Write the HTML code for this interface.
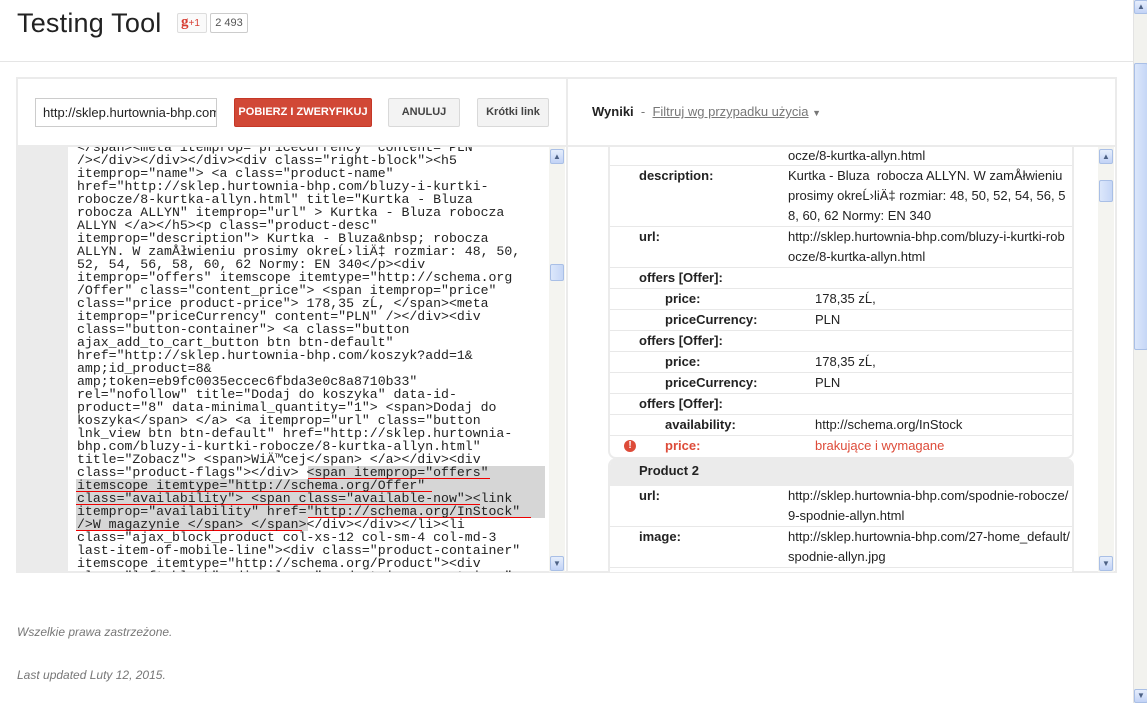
<!DOCTYPE html>
<html><head><meta charset="utf-8">
<style>
*{box-sizing:border-box;margin:0;padding:0}
body{width:1147px;height:703px;overflow:hidden;background:#fff;font-family:"Liberation Sans",Arial,sans-serif;color:#222;position:relative}
.abs{position:absolute}
.title{left:17px;top:8px;font-size:27px;color:#222;letter-spacing:0.2px}
.gp{left:177px;top:13px;width:30px;height:20px;border:1px solid #ddd;border-radius:2px;background:#fafafa;font-size:15px;color:#d73d32;font-family:"Liberation Serif",serif;font-weight:bold;padding-left:3px;line-height:17px}
.gp small{font-family:"Liberation Sans",sans-serif;font-size:10px;font-weight:normal}
.cnt{left:210px;top:13px;width:38px;height:20px;border:1px solid #ccc;border-radius:2px;background:#fff;font-size:11px;color:#555;line-height:18px;text-align:center}
.hr{left:0;top:61px;width:1133px;height:1px;background:#e5e5e5}
.panel{left:16px;top:77px;width:1101px;height:496px;border:2px solid #ebebeb;background:#fff}
.inp{left:35px;top:98px;width:182px;height:29px;border:1px solid #ccc;font-size:13px;padding:6px 0 0 7px;color:#222;overflow:hidden;white-space:nowrap}
.btn{height:29px;top:98px;font-size:11px;font-weight:bold;text-align:center;line-height:27px;border-radius:2px}
.red{left:234px;width:138px;background:#d14836;color:#fff;border:1px solid #c53727}
.gray{background:#f3f3f3;border:1px solid #d9d9d9;color:#444}
.divv{left:566px;top:79px;width:2px;height:492px;background:#ebebeb}
.hb{left:18px;top:145px;width:1097px;height:2px;background:#ebebeb}
.gut{left:18px;top:147px;width:50px;height:425px;background:#ebebeb}
.code{left:68px;top:147px;width:481px;height:425px;overflow:hidden}
.code pre{position:absolute;left:9px;top:-6px;font-family:"Liberation Mono",monospace;font-size:13.2px;line-height:13px;color:#222}
.g{position:absolute;background:#d6d6d6}
.r{position:absolute;height:1px;background:#e00}
.sb{width:16px;background:#f4f4f0}
.arr{position:absolute;left:1px;width:14px;height:15px;background:linear-gradient(#e6eefc,#c2d3f6);border:1px solid #a9bfe6;border-radius:2px;font-size:8px;color:#4d6185;text-align:center;line-height:13px}
.thumb{position:absolute;left:1px;width:14px;background:linear-gradient(90deg,#dce7fb,#c5d6f6);border:1px solid #a9bfe6;border-radius:2px}
.res{left:592px;top:104px;font-size:13px}
.res b{color:#222}
.res span{color:#777}
.res u{color:#777;text-decoration:underline}
.card{position:absolute;left:608px;width:466px;border:2px solid #ebebeb;border-top:none;background:#fff;overflow:hidden}
.row{position:relative;border-bottom:1px solid #e8e8e8;font-size:13px;line-height:20px}
.row .l{position:absolute;left:29px;top:0;font-weight:bold;color:#222}
.row .v{margin-left:178px;color:#222;width:282px;word-break:break-all}
.row.n .l{left:55px}
.row.n .v{margin-left:205px}
.foot{left:17px;font-size:12px;color:#777;font-style:italic}
</style></head><body>
<div class="abs title">Testing Tool</div>
<div class="abs gp">g<small>+1</small></div>
<div class="abs cnt">2 493</div>
<div class="abs hr"></div>

<div class="abs panel"></div>
<div class="abs inp">http://sklep.hurtownia-bhp.com/</div>
<div class="abs btn red">POBIERZ I ZWERYFIKUJ</div>
<div class="abs btn gray" style="left:388px;width:72px">ANULUJ</div>
<div class="abs btn gray" style="left:477px;width:72px">Krótki link</div>
<div class="abs divv"></div>
<div class="abs hb"></div>
<div class="abs gut"></div>
<div class="abs code">
<div class="g" style="left:240px;top:319px;width:237px;height:13px"></div>
<div class="g" style="left:8px;top:332px;width:469px;height:39px"></div>
<div class="g" style="left:8px;top:371px;width:232px;height:13px"></div>
<div class="r" style="left:240px;top:331px;width:182px"></div>
<div class="r" style="left:8px;top:344px;width:356px"></div>
<div class="r" style="left:8px;top:357px;width:404px"></div>
<div class="r" style="left:240px;top:370px;width:223px"></div>
<div class="r" style="left:8px;top:383px;width:226px"></div>
<pre>&lt;/span&gt;&lt;meta itemprop="priceCurrency" content="PLN"
/&gt;&lt;/div&gt;&lt;/div&gt;&lt;/div&gt;&lt;div class="right-block"&gt;&lt;h5
itemprop="name"&gt; &lt;a class="product-name"
href="http://sklep.hurtownia-bhp.com/bluzy-i-kurtki-
robocze/8-kurtka-allyn.html" title="Kurtka - Bluza
robocza ALLYN" itemprop="url" &gt; Kurtka - Bluza robocza
ALLYN &lt;/a&gt;&lt;/h5&gt;&lt;p class="product-desc"
itemprop="description"&gt; Kurtka - Bluza&amp;nbsp; robocza
ALLYN. W zamÅłwieniu prosimy okreĹ›liÄ‡ rozmiar: 48, 50,
52, 54, 56, 58, 60, 62 Normy: EN 340&lt;/p&gt;&lt;div
itemprop="offers" itemscope itemtype="http://schema.org
/Offer" class="content_price"&gt; &lt;span itemprop="price"
class="price product-price"&gt; 178,35 zĹ, &lt;/span&gt;&lt;meta
itemprop="priceCurrency" content="PLN" /&gt;&lt;/div&gt;&lt;div
class="button-container"&gt; &lt;a class="button
ajax_add_to_cart_button btn btn-default"
href="http://sklep.hurtownia-bhp.com/koszyk?add=1&amp;
amp;id_product=8&amp;
amp;token=eb9fc0035eccec6fbda3e0c8a8710b33"
rel="nofollow" title="Dodaj do koszyka" data-id-
product="8" data-minimal_quantity="1"&gt; &lt;span&gt;Dodaj do
koszyka&lt;/span&gt; &lt;/a&gt; &lt;a itemprop="url" class="button
lnk_view btn btn-default" href="http://sklep.hurtownia-
bhp.com/bluzy-i-kurtki-robocze/8-kurtka-allyn.html"
title="Zobacz"&gt; &lt;span&gt;WiÄ™cej&lt;/span&gt; &lt;/a&gt;&lt;/div&gt;&lt;div
class="product-flags"&gt;&lt;/div&gt; &lt;span itemprop="offers"
itemscope itemtype="http://schema.org/Offer"
class="availability"&gt; &lt;span class="available-now"&gt;&lt;link
itemprop="availability" href="http://schema.org/InStock"
/&gt;W magazynie &lt;/span&gt; &lt;/span&gt;&lt;/div&gt;&lt;/div&gt;&lt;/li&gt;&lt;li
class="ajax_block_product col-xs-12 col-sm-4 col-md-3
last-item-of-mobile-line"&gt;&lt;div class="product-container"
itemscope itemtype="http://schema.org/Product"&gt;&lt;div
class="left-block"&gt;&lt;div class="product-image-container"&gt;</pre></div>
<div class="abs sb" style="left:549px;top:147px;height:425px">
<div class="arr" style="top:2px">&#9650;</div>
<div class="thumb" style="top:117px;height:17px"></div>
<div class="arr" style="top:409px">&#9660;</div>
</div>

<div class="abs res"><b>Wyniki</b> <span>&nbsp;-&nbsp; </span><u>Filtruj wg przypadku użycia</u> <span style="font-size:9px">&#9660;</span></div>

<div class="abs" style="left:568px;top:147px;width:530px;height:425px;overflow:hidden">
<div class="card" style="left:40px;top:-2px;border-radius:0 0 8px 8px;">
<div class="row" style="height:21px"><div class="v" style="padding-top:1px">ocze/8-kurtka-allyn.html</div></div>
<div class="row" style="height:61px"><div class="l">description:</div><div class="v">Kurtka - Bluza&nbsp; robocza ALLYN. W zamÅłwieniu prosimy okreĹ›liÄ‡ rozmiar: 48, 50, 52, 54, 56, 58, 60, 62 Normy: EN 340</div></div>
<div class="row" style="height:41px"><div class="l">url:</div><div class="v">http://sklep.hurtownia-bhp.com/bluzy-i-kurtki-robocze/8-kurtka-allyn.html</div></div>
<div class="row" style="height:21px"><div class="l">offers [Offer]:</div></div>
<div class="row n" style="height:21px"><div class="l">price:</div><div class="v">178,35 zĹ,</div></div>
<div class="row n" style="height:21px"><div class="l">priceCurrency:</div><div class="v">PLN</div></div>
<div class="row" style="height:21px"><div class="l">offers [Offer]:</div></div>
<div class="row n" style="height:21px"><div class="l">price:</div><div class="v">178,35 zĹ,</div></div>
<div class="row n" style="height:21px"><div class="l">priceCurrency:</div><div class="v">PLN</div></div>
<div class="row" style="height:21px"><div class="l">offers [Offer]:</div></div>
<div class="row n" style="height:21px"><div class="l">availability:</div><div class="v">http://schema.org/InStock</div></div>
<div class="row n" style="height:21px;border-bottom:none"><div style="position:absolute;left:14px;top:4px;width:12px;height:12px;border-radius:50%;background:#dd4b39;color:#fff;font-size:10px;font-weight:bold;text-align:center;line-height:12px">!</div><div class="l" style="color:#dd4b39">price:</div><div class="v" style="color:#dd4b39">brakujące i wymagane</div></div>
</div>
<div class="card" style="left:40px;top:311px;border-radius:8px 8px 0 0;height:120px">
<div style="height:28px;background:#ebebeb;font-weight:bold;font-size:13px;line-height:26px;padding-left:29px">Product 2</div>
<div class="row" style="height:41px"><div class="l">url:</div><div class="v">http://sklep.hurtownia-bhp.com/spodnie-robocze/9-spodnie-allyn.html</div></div>
<div class="row" style="height:41px"><div class="l">image:</div><div class="v">http://sklep.hurtownia-bhp.com/27-home_default/spodnie-allyn.jpg</div></div>
</div>
</div>
<div class="abs sb" style="left:1098px;top:147px;height:425px">
<div class="arr" style="top:2px">&#9650;</div>
<div class="thumb" style="top:33px;height:22px"></div>
<div class="arr" style="top:409px">&#9660;</div>
</div>

<div class="abs foot" style="top:625px">Wszelkie prawa zastrzeżone.</div>
<div class="abs foot" style="top:668px">Last updated Luty 12, 2015.</div>

<div class="abs" style="left:1133px;top:0;width:14px;height:703px;background:#f2f2ee;border-left:1px solid #e3e3e3">
<div class="arr" style="top:0;left:0;width:14px;height:14px;line-height:12px">&#9650;</div>
<div class="thumb" style="top:63px;left:0;width:14px;height:287px"></div>
<div class="arr" style="top:689px;left:0;width:14px;height:14px;line-height:12px">&#9660;</div>
</div>
</body></html>
